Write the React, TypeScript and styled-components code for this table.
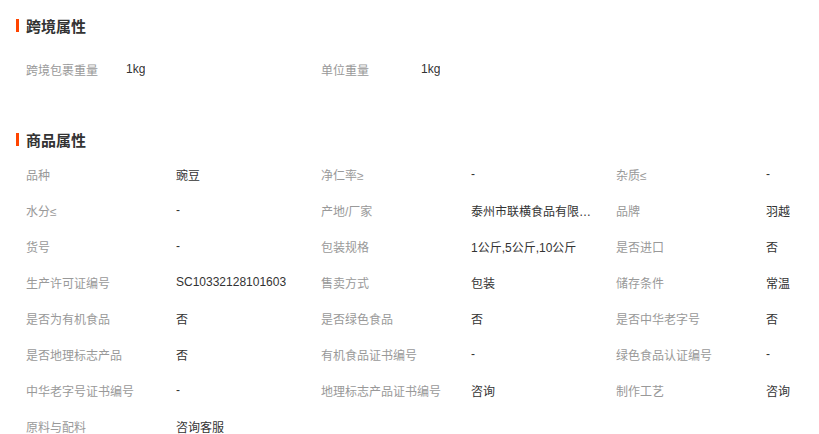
import styled, { createGlobalStyle } from 'styled-components';

interface Attr {
  label: string;
  value: string;
}

const GlobalStyle = createGlobalStyle`
  body {
    margin: 0;
    background: #fff;
    font-family: "Liberation Sans", "Noto Sans CJK SC", sans-serif;
  }
`;

const Page = styled.div`
  width: 819px;
  padding-top: 15px;
  overflow: hidden;
`;

const SectionTitle = styled.h3`
  display: flex;
  align-items: center;
  gap: 7px;
  margin: 0;
  padding-left: 16px;
  height: 20px;
  font-size: 15px;
  font-weight: bold;
  color: #333;
  font-family: "Noto Sans CJK SC", sans-serif;

  &::before {
    content: '';
    width: 3px;
    height: 13px;
    background: #ff4400;
  }
`;

const AttrGrid = styled.ul<{ $top: number; $bottom: number }>`
  display: grid;
  grid-template-columns: 295px 295px 1fr;
  list-style: none;
  margin: 0;
  padding: ${(p) => p.$top}px 0 ${(p) => p.$bottom}px 26px;
`;

const AttrItem = styled.li`
  display: flex;
  height: 36px;
  align-items: center;
  font-size: 12px;
`;

const Label = styled.span<{ $width: number }>`
  width: ${(p) => p.$width}px;
  flex-shrink: 0;
  color: #999;
`;

const Value = styled.span`
  max-width: 124px;
  color: #333;
  white-space: nowrap;
  overflow: hidden;
  text-overflow: ellipsis;
`;

const crossBorder: Attr[] = [
  { label: '跨境包裹重量', value: '1kg' },
  { label: '单位重量', value: '1kg' },
];

const product: Attr[] = [
  { label: '品种', value: '豌豆' },
  { label: '净仁率≥', value: '-' },
  { label: '杂质≤', value: '-' },
  { label: '水分≤', value: '-' },
  { label: '产地/厂家', value: '泰州市联横食品有限公司' },
  { label: '品牌', value: '羽越' },
  { label: '货号', value: '-' },
  { label: '包装规格', value: '1公斤,5公斤,10公斤' },
  { label: '是否进口', value: '否' },
  { label: '生产许可证编号', value: 'SC10332128101603' },
  { label: '售卖方式', value: '包装' },
  { label: '储存条件', value: '常温' },
  { label: '是否为有机食品', value: '否' },
  { label: '是否绿色食品', value: '否' },
  { label: '是否中华老字号', value: '否' },
  { label: '是否地理标志产品', value: '否' },
  { label: '有机食品证书编号', value: '-' },
  { label: '绿色食品认证编号', value: '-' },
  { label: '中华老字号证书编号', value: '-' },
  { label: '地理标志产品证书编号', value: '咨询' },
  { label: '制作工艺', value: '咨询' },
  { label: '原料与配料', value: '咨询客服' },
];

function AttrList(props: { items: Attr[]; labelWidth: number; top: number; bottom: number }) {
  return (
    <AttrGrid $top={props.top} $bottom={props.bottom}>
      {props.items.map((item) => (
        <AttrItem key={item.label}>
          <Label $width={props.labelWidth}>{item.label}</Label>
          <Value>{item.value}</Value>
        </AttrItem>
      ))}
    </AttrGrid>
  );
}

export default function App() {
  return (
    <Page>
      <GlobalStyle />
      <SectionTitle>跨境属性</SectionTitle>
      <AttrList items={crossBorder} labelWidth={100} top={16} bottom={42} />
      <SectionTitle>商品属性</SectionTitle>
      <AttrList items={product} labelWidth={150} top={7} bottom={0} />
    </Page>
  );
}
